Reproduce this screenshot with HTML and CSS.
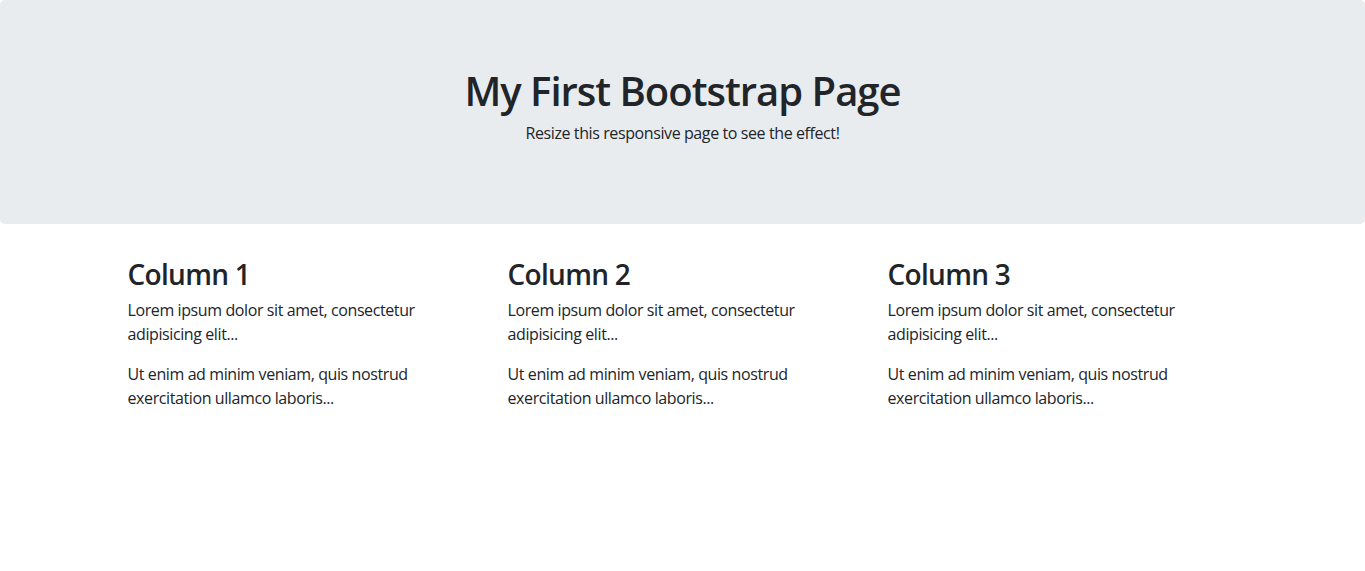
FILE: index.html
```html
<!DOCTYPE html>
<html lang="en">
<head>
    <meta charset="UTF-8">
    <meta name="viewport" content="width=device-width, initial-scale=1.0">
    <title>Bootstrap Example</title>
    <link rel="stylesheet" href="styles.css">
</head>
<body>
    <div class="jumbotron">
        <h1>My First Bootstrap Page</h1>
        <p>Resize this responsive page to see the effect!</p>
    </div>

    <div class="container">
        <div class="row">
            <div class="col">
                <h3>Column 1</h3>
                <p>Lorem ipsum dolor sit amet, consectetur adipisicing elit...</p>
                <p>Ut enim ad minim veniam, quis nostrud exercitation ullamco laboris...</p>
            </div>
            <div class="col">
                <h3>Column 2</h3>
                <p>Lorem ipsum dolor sit amet, consectetur adipisicing elit...</p>
                <p>Ut enim ad minim veniam, quis nostrud exercitation ullamco laboris...</p>
            </div>
            <div class="col">
                <h3>Column 3</h3>
                <p>Lorem ipsum dolor sit amet, consectetur adipisicing elit...</p>
                <p>Ut enim ad minim veniam, quis nostrud exercitation ullamco laboris...</p>
            </div>
        </div>
    </div>
</body>
</html>
```

FILE: styles.css
```css
body {
    margin: 0;
    font-family: "Open Sans", "Noto Sans", Arial, sans-serif;
    font-size: 16px;
    line-height: 1.5;
    letter-spacing: -0.4px;
    color: #212529;
    background-color: #fff;
}
h1, h3, p {
    margin-top: 0;
}
h1, h3 {
    margin-bottom: 8px;
    font-weight: 600;
    line-height: 1.2;
}
h1 {
    font-size: 40px;
    letter-spacing: -1px;
    padding-top: 3px;
    margin-bottom: 6px;
}
h3 {
    font-size: 28px;
    letter-spacing: -0.7px;
    padding-top: 2px;
    margin-bottom: 6px;
}
p {
    margin-bottom: 16px;
}
.jumbotron {
    padding: 64px 32px 63px;
    margin-bottom: 32px;
    background-color: #e9ecef;
    border-radius: 5px;
    text-align: center;
}
.container {
    width: 1140px;
    margin: 0 auto;
    padding: 0 15px;
    box-sizing: border-box;
}
.row {
    display: flex;
    margin: 0 -15px;
}
.col {
    flex: 1;
    padding: 0 15px;
}
```
